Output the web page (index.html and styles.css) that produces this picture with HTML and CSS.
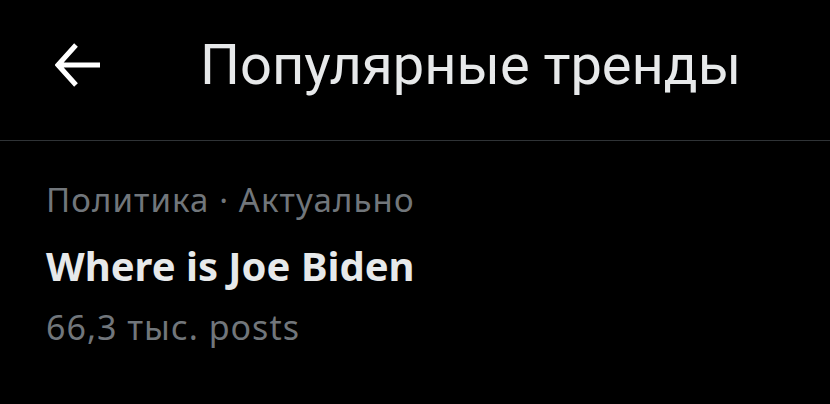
FILE: index.html
```html
<!DOCTYPE html>
<html lang="ru">
<head>
  <meta charset="UTF-8" />
  <meta name="viewport" content="width=device-width, initial-scale=1" />
  <title>Популярные тренды</title>
  <link rel="stylesheet" href="styles.css">
</head>
<body>
  <header class="topbar">
    <button class="back" aria-label="Назад">
      <svg width="46" height="44" viewBox="0 0 46 44">
        <path d="M21 2 L3 22 L21 42 M3 22 H45" fill="none" stroke="#fff" stroke-width="5"/>
      </svg>
    </button>
    <h1>Популярные тренды</h1>
  </header>

  <div class="trend">
    <div class="meta">Политика · Актуально</div>
    <div class="name">Where is Joe Biden</div>
    <div class="count">66,3 тыс. posts</div>
  </div>
</body>
</html>
```

FILE: styles.css
```css
body {
  margin: 0;
  background: #000;
  color: #e7e9ea;
  font-family: "Noto Sans", sans-serif;
}
.topbar {
  display: flex;
  align-items: center;
  height: 140px;
  border-bottom: 1px solid #2f3336;
  padding-left: 55px;
}
.back {
  background: none;
  border: none;
  padding: 0;
  width: 46px;
  height: 44px;
  margin-top: -10px;
  cursor: pointer;
}
.back svg { display: block; }
h1 {
  margin: -10px 0 0 99px;
  font-family: Roboto, sans-serif;
  font-weight: 400;
  font-size: 56px;
  color: #e7e9ea;
}
.trend {
  padding: 37px 46px;
}
.meta {
  color: #71767b;
  font-size: 33px;
  line-height: 44px;
  letter-spacing: 1.1px;
}
.name {
  margin-top: 16px;
  font-weight: 700;
  font-size: 40px;
  line-height: 56px;
}
.count {
  margin-top: 10px;
  color: #71767b;
  font-size: 34px;
  line-height: 46px;
  letter-spacing: 1px;
}
```
